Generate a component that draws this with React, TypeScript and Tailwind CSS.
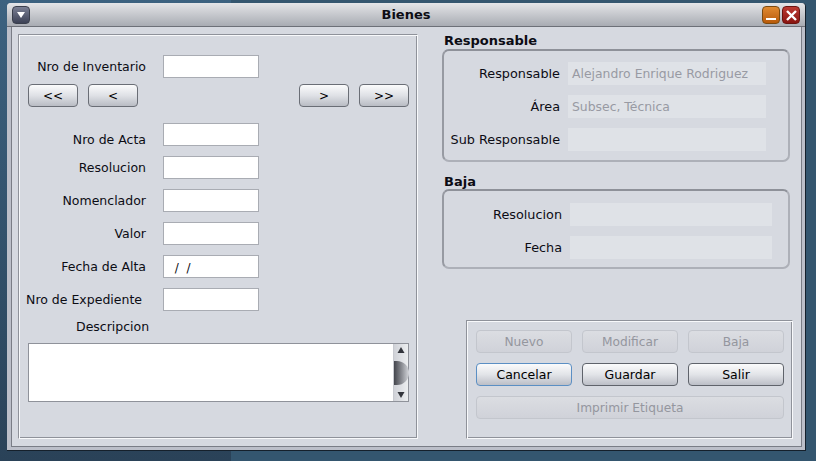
import type { ReactNode } from "react";

const font = "font-['DejaVu_Sans',sans-serif]";

function Field({ label, labelClass = "w-[118px]", value = "" }: { label: string; labelClass?: string; value?: string }) {
  return (
    <div className="flex h-[23px] items-center">
      <span className={`${labelClass} shrink-0 pt-[2px] text-right text-[12.5px] whitespace-nowrap`}>{label}</span>
      <div className="ml-auto h-[23px] w-[96px] border border-[#a9acb3] bg-white pl-[7px] text-[12px] leading-[24px] whitespace-pre">{value}</div>
    </div>
  );
}

function NavButton({ children }: { children: ReactNode }) {
  return (
    <button className="h-[23px] w-[50px] rounded-[4px] border border-[#6a6e76] bg-gradient-to-b from-[#fbfbfc] via-[#dfe1e6] to-[#b9bcc4] text-[12px] leading-none text-black">
      {children}
    </button>
  );
}

function ActionButton({ children, state = "normal", className = "" }: { children: ReactNode; state?: "normal" | "disabled" | "focus"; className?: string }) {
  const look =
    state === "disabled"
      ? "border-[#c3c6cd] bg-gradient-to-b from-[#dbdde2] to-[#d0d2d9] text-[12.2px] text-[#94969e]"
      : state === "focus"
        ? "border-[#5b8fc4] bg-gradient-to-b from-[#fbfbfc] via-[#e2e4e8] to-[#bcbfc7] text-[12.5px] text-black"
        : "border-[#5f636b] bg-gradient-to-b from-[#fbfbfc] via-[#e2e4e8] to-[#bcbfc7] text-[12.5px] text-black";
  return <button className={`h-[23px] rounded-[4px] border pt-[2px] leading-none ${look} ${className}`}>{children}</button>;
}

function ReadOnly({ label, value = "", labelWidth, inputWidth }: { label: string; value?: string; labelWidth: string; inputWidth: string }) {
  return (
    <div className="flex h-[23px] items-center">
      <span className={`${labelWidth} shrink-0 text-right text-[12.8px] whitespace-nowrap`}>{label}</span>
      <div className={`${inputWidth} ml-[8px] h-[23px] bg-[#dfe2e7] pl-[4px] text-[12.4px] leading-[23px] text-[#989aa3] whitespace-nowrap`}>{value}</div>
    </div>
  );
}

export default function App() {
  return (
    <div className={`${font} h-[461px] w-[816px] overflow-hidden bg-[linear-gradient(90deg,transparent_231px,#34566f_231px),linear-gradient(180deg,#3c6280,#2a4258)] pl-[7px] pt-[3px] text-[#0c0c14]`}>
      <div className="flex h-[448px] w-[799px] flex-col rounded-t-[4px] border-b border-r border-[#15202b] bg-[#bcbfc9]">
        <div className="relative flex h-[24px] shrink-0 items-center justify-center rounded-t-[4px] border-b border-[#6d7078] bg-gradient-to-b from-[#e4e5e8] to-[#a9acb3]">
          <span className="text-[13px] font-bold">Bienes</span>
          <div className="absolute left-[5px] top-[3px] flex h-[18px] w-[18px] items-center justify-center rounded-[4px] border border-[#3a3f4c] bg-gradient-to-b from-[#7b8094] to-[#3d4256]">
            <svg width="8" height="6" viewBox="0 0 8 6"><path d="M0 0H8L4 6Z" fill="#fff" /></svg>
          </div>
          <div className="absolute left-[755px] top-[3px] flex h-[18px] w-[18px] items-center justify-center rounded-[4px] border border-[#7b4a10] bg-gradient-to-b from-[#e08a30] to-[#b85a08]">
            <div className="mt-[8px] h-[2px] w-[10px] bg-white" />
          </div>
          <div className="absolute left-[775px] top-[3px] flex h-[18px] w-[18px] items-center justify-center rounded-[4px] border border-[#6b1410] bg-gradient-to-b from-[#bd3a32] to-[#8a1410]">
            <svg width="11" height="11" viewBox="0 0 11 11"><path d="M1 1L10 10M10 1L1 10" stroke="#fff" strokeWidth="2.4" /></svg>
          </div>
        </div>
        <div className="ml-[4px] mr-[3px] mb-[3px] flex min-h-0 flex-1 border-x border-b border-[#7a7d86] bg-[#d6d9e0] pl-[6px] pt-[7px]">
          {/* left panel */}
          <div className="flex h-[405px] w-[400px] shrink-0 flex-col border border-t-[#8f929a] border-l-[#8f929a] border-r-[#f8f9fb] border-b-[#f8f9fb] pl-[9px] pr-[8px] shadow-[inset_1px_1px_0_#f8f9fb,inset_-1px_-1px_0_#8f929a]">
            <div className="mt-[20px] w-[231px]">
              <Field label="Nro de Inventario" />
            </div>
            <div className="mt-[6px] flex gap-[10px]">
              <NavButton>&lt;&lt;</NavButton>
              <NavButton>&lt;</NavButton>
              <div className="ml-auto flex gap-[10px]">
                <NavButton>&gt;</NavButton>
                <NavButton>&gt;&gt;</NavButton>
              </div>
            </div>
            <div className="mt-[16px] flex w-[231px] flex-col gap-[10px]">
              <Field label="Nro de Acta" labelClass="w-[118px] mt-[10px]" />
              <Field label="Resolucion" />
              <Field label="Nomenclador" />
              <Field label="Valor" />
              <Field label="Fecha de Alta" value=" /  /" />
              <Field label="Nro de Expediente" labelClass="-ml-[3px] w-[117px]" />
            </div>
            <div className="mt-[8px] pl-[48px] text-[12.5px] leading-[16px]">Descripcion</div>
            <div className="mt-[8px] flex h-[59px] border border-[#8f929a] bg-white">
              <div className="flex-1" />
              <div className="flex w-[15px] flex-col items-center justify-between border-l border-[#c8cad0] bg-gradient-to-r from-[#d0d2d8] to-[#eceef0] py-[2px]">
                <svg width="8" height="8" viewBox="0 0 8 8"><path d="M4 1L7.5 7H.5Z" fill="#33353c" /></svg>
                <div className="h-[24px] w-[15px] rounded-r-full bg-gradient-to-r from-[#44464d] to-[#d6d8dd]" />
                <svg width="8" height="8" viewBox="0 0 8 8"><path d="M4 7L.5 1H7.5Z" fill="#33353c" /></svg>
              </div>
            </div>
          </div>
          {/* right column */}
          <div className="-mt-[1px] ml-[24px] flex min-w-0 flex-1 flex-col">
            <div className="pl-[2px] text-[13px] font-bold leading-[15px]">Responsable</div>
            <div className="mt-[1px] flex h-[113px] w-[348px] flex-col gap-[10px] rounded-[7px] border-2 border-[#adb0b8] border-t-[#8e9199] border-l-[#979aa2] pt-[11px]">
              <ReadOnly label="Responsable" value="Alejandro Enrique Rodriguez" labelWidth="w-[116px]" inputWidth="w-[198px]" />
              <ReadOnly label="Área" value="Subsec, Técnica" labelWidth="w-[116px]" inputWidth="w-[198px]" />
              <ReadOnly label="Sub Responsable" labelWidth="w-[116px]" inputWidth="w-[198px]" />
            </div>
            <div className="mt-[12px] pl-[2px] text-[13px] font-bold leading-[15px]">Baja</div>
            <div className="flex h-[80px] w-[348px] flex-col gap-[10px] rounded-[7px] border-2 border-[#adb0b8] border-t-[#8e9199] border-l-[#979aa2] pt-[12px]">
              <ReadOnly label="Resolucion" labelWidth="w-[118px]" inputWidth="w-[202px]" />
              <ReadOnly label="Fecha" labelWidth="w-[118px]" inputWidth="w-[202px]" />
            </div>
            <div className="ml-[24px] mt-[51px] grid h-[119px] w-[327px] grid-cols-3 content-start gap-x-[10px] gap-y-[10px] border border-t-[#8f929a] border-l-[#8f929a] border-r-[#f8f9fb] border-b-[#f8f9fb] pl-[9px] pr-[8px] pt-[9px] shadow-[inset_1px_1px_0_#f8f9fb,inset_-1px_-1px_0_#8f929a]">
              <ActionButton state="disabled">Nuevo</ActionButton>
              <ActionButton state="disabled">Modificar</ActionButton>
              <ActionButton state="disabled">Baja</ActionButton>
              <ActionButton state="focus">Cancelar</ActionButton>
              <ActionButton>Guardar</ActionButton>
              <ActionButton>Salir</ActionButton>
              <ActionButton state="disabled" className="col-span-3">Imprimir Etiqueta</ActionButton>
            </div>
          </div>
        </div>
      </div>
    </div>
  );
}
